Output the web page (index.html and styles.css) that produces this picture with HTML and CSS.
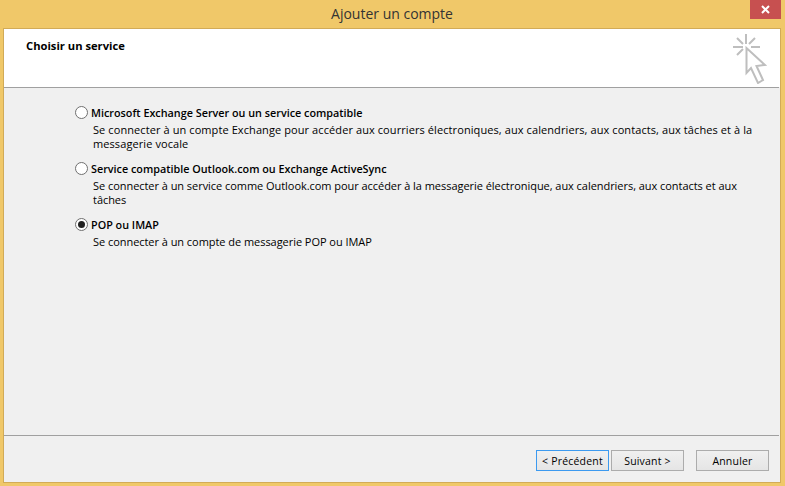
FILE: index.html
```html
<!DOCTYPE html>
<html lang="fr">
<head>
<meta charset="utf-8">
<title>Ajouter un compte</title>
<link rel="stylesheet" href="styles.css">
</head>
<body>
<div class="window">
  <div class="titlebar">
    <span class="title">Ajouter un compte</span>
    <div class="close"><svg width="9" height="9" viewBox="0 0 9 9"><path d="M1 1L8 8M8 1L1 8" stroke="#fff" stroke-width="2" fill="none"/></svg></div>
  </div>
  <div class="client">
    <div class="header">
      <h1 class="heading">Choisir un service</h1>
      <svg class="wizard-icon" width="34" height="51" viewBox="0 0 34 51">
        <g stroke="#bebebe" stroke-width="2" fill="none">
          <path d="M13 1V11M0 14H10M18 14H27M4 5L10 11M22 5L16 11M4 22L10 16"/>
          <path d="M13.5 15V40L18 35L25 50L30 47L23.500 33L32 32Z" fill="#fff"/>
        </g>
      </svg>
    </div>
    <div class="rule"></div>
    <div class="options">
      <div class="option">
        <div class="option-label"><span class="radio"></span><span class="option-name">Microsoft Exchange Server ou un service compatible</span></div>
        <p class="option-desc">Se connecter à un compte Exchange pour accéder aux courriers électroniques, aux calendriers, aux contacts, aux tâches et à la messagerie vocale</p>
      </div>
      <div class="option">
        <div class="option-label"><span class="radio"></span><span class="option-name">Service compatible Outlook.com ou Exchange ActiveSync</span></div>
        <p class="option-desc tight">Se connecter à un service comme Outlook.com pour accéder à la messagerie électronique, aux calendriers, aux contacts et aux tâches</p>
      </div>
      <div class="option">
        <div class="option-label"><span class="radio checked"></span><span class="option-name">POP ou IMAP</span></div>
        <p class="option-desc tight last">Se connecter à un compte de messagerie POP ou IMAP</p>
      </div>
    </div>
    <div class="rule"></div>
    <div class="footer">
      <button class="btn focus">&lt; Précédent</button>
      <button class="btn">Suivant &gt;</button>
      <button class="btn cancel">Annuler</button>
    </div>
  </div>
</div>
</body>
</html>
```
FILE: styles.css
```css
* { box-sizing: border-box; }
html, body { margin: 0; height: 100%; }
body { font-family: "Open Sans", "Noto Sans", sans-serif; font-size: 11px; color: #000; background: #f0c869; overflow: hidden; }
.window { width: 785px; height: 486px; display: flex; flex-direction: column; padding: 0 4px 3px 3px; }
.titlebar { height: 29px; flex: none; position: relative; display: flex; justify-content: center; border-bottom: 1px solid #d2ab57; }
.title { font-size: 14px; color: #333; line-height: 28px; }
.close { position: absolute; right: 0; top: 0; width: 31px; height: 19px; background: #c75050; display: flex; align-items: center; justify-content: center; }
.client { flex: 1; display: flex; flex-direction: column; border: 1px solid #d2ab57; border-top: 0; background: #f0f0f0; }
.header { height: 58px; flex: none; background: #fff; position: relative; padding: 9px 0 0 22px; }
.rule { height: 1px; flex: none; margin-right: 1px; background: #a0a0a0; }
.heading { margin: 0; font-size: 11.2px; font-weight: 700; line-height: 15px; }
.wizard-icon { position: absolute; right: 13px; top: 4px; }
.options { flex: 1; padding: 17px 21px 0 71px; display: flex; flex-direction: column; }
.option { height: 56px; }
.option-label { display: flex; align-items: center; gap: 3px; height: 15px; margin-bottom: 3px; }
.option-name { font-size: 10.8px; font-weight: 600; white-space: nowrap; }
.radio { width: 13px; height: 13px; border-radius: 50%; border: 1px solid #707070; background: #fff; flex: none; position: relative; }
.radio.checked::after { content: ""; position: absolute; left: 2px; top: 2px; width: 7px; height: 7px; border-radius: 50%; background: #222; }
.option-desc { margin: 0 0 0 18px; line-height: 14px; letter-spacing: 0.09px; }
.option-desc.tight { letter-spacing: -0.045px; }
.option-desc.last { margin-top: 1px; }
.footer { height: 46px; flex: none; display: flex; justify-content: flex-end; align-items: flex-start; gap: 2px; padding: 14px 11px 0 0; }
.btn { width: 73px; height: 21px; padding: 0; border: 1px solid #acacac; background: linear-gradient(#f0f0f0, #e5e5e5); font: inherit; font-size: 10.5px; color: #000; letter-spacing: 0.2px; }
.btn.focus { border-color: #3c9af0; }
.btn.cancel { margin-left: 10px; }
```
